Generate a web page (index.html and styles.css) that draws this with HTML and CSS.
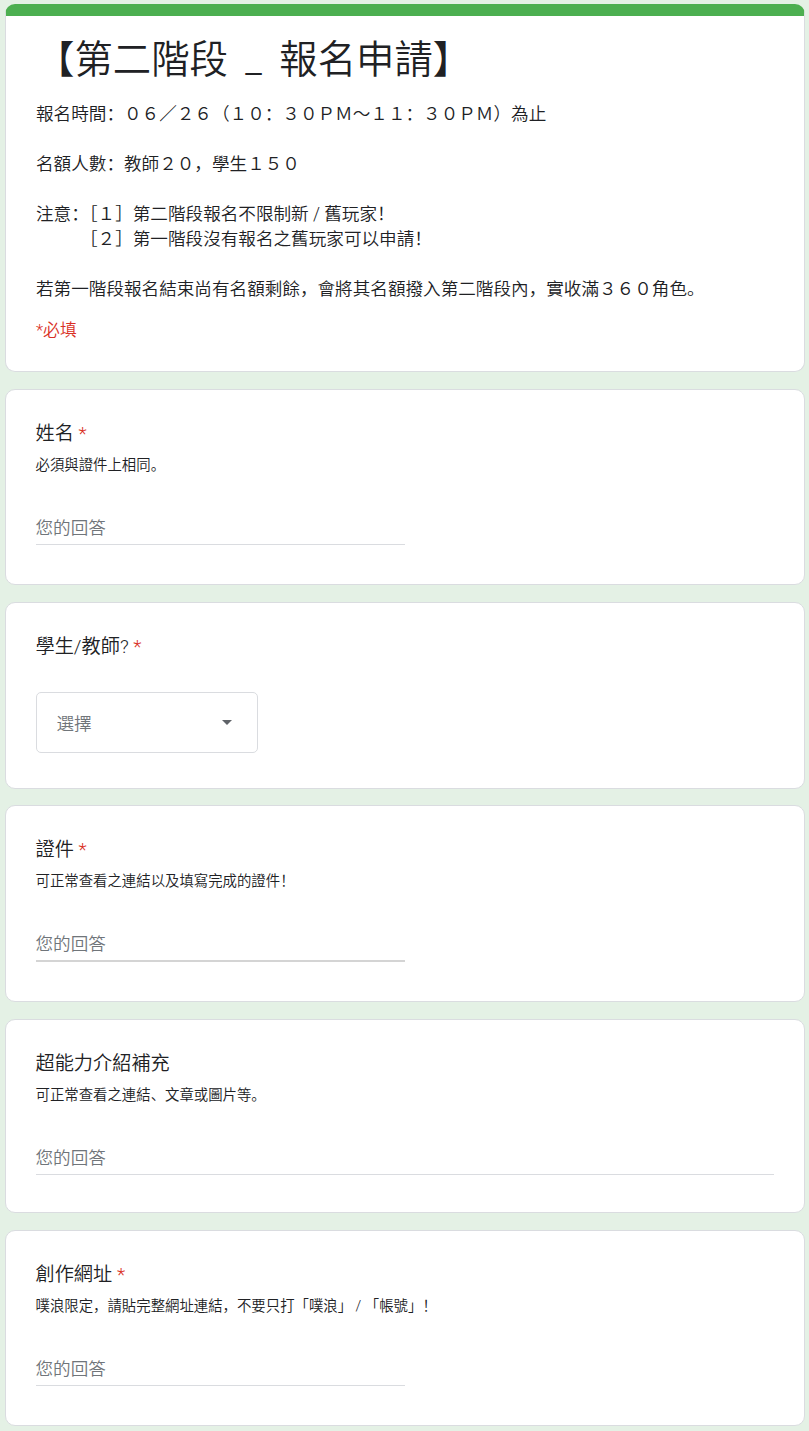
FILE: index.html
```html
<!DOCTYPE html>
<html lang="zh-Hant">
<head>
<meta charset="utf-8">
<title>【第二階段 _ 報名申請】</title>
<link rel="stylesheet" href="styles.css">
</head>
<body>
<main class="form">
  <section class="card card-header">
    <h1 class="form-title">【第二階段 _ 報名申請】</h1>
    <div class="form-desc">報名時間：０６／２６（１０：３０ＰＭ～１１：３０ＰＭ）為止

名額人數：教師２０，學生１５０

注意：［１］第二階段報名不限制新 / 舊玩家！
　　　［２］第一階段沒有報名之舊玩家可以申請！

若第一階段報名結束尚有名額剩餘，會將其名額撥入第二階段內，實收滿３６０角色。</div>
    <div class="required-note">*必填</div>
  </section>

  <section class="card question">
    <div class="q-title">姓名 <span class="star">*</span></div>
    <div class="q-help">必須與證件上相同。</div>
    <div class="answer answer-short"><span class="placeholder">您的回答</span></div>
  </section>

  <section class="card question">
    <div class="q-title">學生/教師? <span class="star">*</span></div>
    <div class="select">
      <span class="placeholder">選擇</span>
      <svg class="select-arrow" width="10" height="5" viewBox="0 0 10 5"><path d="M0 0h10L5 5z" fill="#5f6368"/></svg>
    </div>
  </section>

  <section class="card question">
    <div class="q-title">證件 <span class="star">*</span></div>
    <div class="q-help">可正常查看之連結以及填寫完成的證件！</div>
    <div class="answer answer-short answer-hover"><span class="placeholder">您的回答</span></div>
  </section>

  <section class="card question">
    <div class="q-title">超能力介紹補充</div>
    <div class="q-help">可正常查看之連結、文章或圖片等。</div>
    <div class="answer answer-long"><span class="placeholder">您的回答</span></div>
  </section>

  <section class="card question">
    <div class="q-title">創作網址 <span class="star">*</span></div>
    <div class="q-help">噗浪限定，請貼完整網址連結，不要只打「噗浪」 / 「帳號」！</div>
    <div class="answer answer-short"><span class="placeholder">您的回答</span></div>
  </section>
</main>
</body>
</html>
```

FILE: styles.css
```css
html, body {
  margin: 0;
  padding: 0;
}

body {
  background: #e4f1e5;
  font-family: Roboto, "Noto Sans CJK SC", "Noto Sans CJK TC", sans-serif;
  font-weight: 350;
  font-feature-settings: "locl" 0;
  color: #202124;
}

.form {
  width: 800px;
  margin: 0 auto;
  padding: 4px 0 10px;
  display: flex;
  flex-direction: column;
  gap: 16.8px;
}

.card {
  background: #fff;
  border: 1px solid #dadce0;
  border-radius: 10px;
  padding: 29px 30px;
  box-sizing: border-box;
}

.card-header {
  border-top: 12px solid #4caf50;
  padding-top: 19.5px;
  padding-bottom: 31px;
  padding-left: 30.5px;
}

.form-title {
  margin: 0;
  font-size: 38.4px;
  line-height: 48px;
  font-weight: 350;
  word-spacing: 8px;
  color: #202124;
}

.form-desc {
  margin-top: 18.5px;
  font-size: 17.6px;
  line-height: 25px;
  white-space: pre-wrap;
  color: #202124;
}

.required-note {
  margin-top: 18px;
  font-size: 16.8px;
  line-height: 20px;
  color: #d93025;
}

.q-title {
  font-size: 19.2px;
  line-height: 29px;
  color: #202124;
}

.star {
  color: #d93025;
}

.q-help {
  margin-top: 8px;
  font-size: 14.4px;
  line-height: 20px;
  color: #202124;
}

.answer {
  margin-top: 38px;
  margin-bottom: 10px;
  padding-bottom: 2px;
  border-bottom: 1px solid #dadce0;
  font-size: 17.6px;
  line-height: 28px;
}

.answer-short {
  width: 50%;
}

.answer-long {
  width: 100%;
  margin-bottom: 8px;
}

.answer-hover {
  border-bottom: 2px solid #d4d4d4;
  margin-bottom: 10px;
}

.placeholder {
  color: #70757a;
}

.select {
  margin-top: 31px;
  margin-bottom: 6px;
  width: 222px;
  height: 61px;
  box-sizing: border-box;
  border: 1px solid #dadce0;
  border-radius: 5px;
  padding: 0 25px 0 20px;
  display: flex;
  align-items: center;
  justify-content: space-between;
  font-size: 17.6px;
}

.select-arrow {
  display: block;
}
```
